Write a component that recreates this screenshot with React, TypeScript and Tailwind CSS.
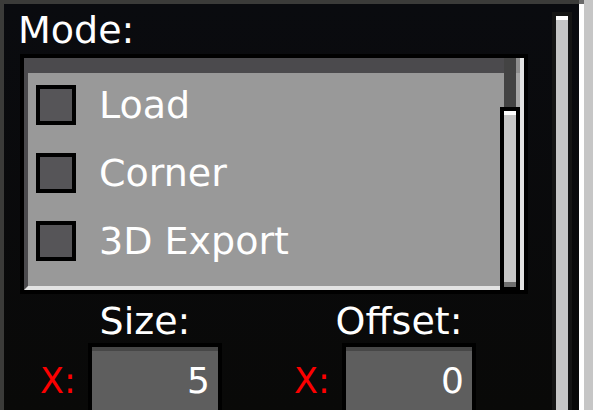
const font = "font-['DejaVu_Sans',sans-serif]";

const modes = ["Load", "Corner", "3D Export"];

function Checkbox() {
  return <div className="h-10 w-10 shrink-0 border-4 border-black bg-[#565558]" />;
}

function NumberField({ label, value }: { label: string; value: string }) {
  return (
    <div className="flex flex-col pl-9">
      <div className="ml-7 w-[154px] text-center text-[38px] leading-[38px] text-white">{label}</div>
      <div className="mt-[3px] flex items-baseline">
        <span className="w-12 text-[35px] leading-[35px] text-[#fc0000]">X:</span>
        <div className="h-[80px] w-[134px] border-4 border-black">
          <div className="h-full border-t-4 border-[#474747] bg-[#5e5e5e] pt-3 pr-2 text-right text-[36px] leading-[36px] text-white">
            {value}
          </div>
        </div>
      </div>
    </div>
  );
}

export default function App() {
  return (
    <div className={`flex h-[410px] w-[593px] overflow-hidden ${font}`}>
      <div className="flex flex-1 border-l-4 border-t-4 border-[#3b3b39] bg-gradient-to-b from-[#0a0b0f] to-[#090908]">
        <div className="flex w-[548px] shrink-0 flex-col">
          <div className="mt-[7px] shrink-0 pl-[14px] text-[38px] leading-[38px] text-white">Mode:</div>

          <div className="ml-4 mt-[5px] flex h-[240px] w-[508px] shrink-0 border-4 border-black">
            <div className="w-[476px] overflow-hidden border-b-4 border-l-4 border-t-[15px] border-[#4b4a4d] border-b-[#e3e3e3] bg-[#999999]">
              <div className="flex flex-col gap-[28px] pl-2 pt-3">
                {modes.map((m) => (
                  <div key={m} className="flex h-10 items-center gap-[23px]">
                    <Checkbox />
                    <span className="text-[38px] leading-[38px] text-white">{m}</span>
                  </div>
                ))}
              </div>
            </div>

            <div className="flex w-5 flex-col">
              <div className="flex h-[49px] shrink-0">
                <div className="w-1 border-t-[15px] border-[#4b4a4d] bg-[#999999]" />
                <div className="w-3 bg-[#434343]" />
                <div className="w-1 border-t-[15px] border-[#8f8f8f] bg-[#a6a6a6]" />
              </div>
              <div className="flex flex-1 flex-col border-4 border-b-[3px] border-black">
                <div className="h-1 bg-white" />
                <div className="flex-1 bg-[#c6c6c6]" />
                <div className="h-[5px] bg-[#6f6f6f]" />
              </div>
            </div>

            <div className="w-1 bg-[#e3e3e3]" />
          </div>

          <div className="mt-2 grid shrink-0 grid-cols-[254px_254px]">
            <NumberField label="Size:" value="5" />
            <NumberField label="Offset:" value="0" />
          </div>
        </div>

        <div className="mt-2 flex w-5 flex-col border-x-4 border-t-4 border-[#151514]">
          <div className="h-1 bg-white" />
          <div className="flex-1 bg-[#c6c6c6]" />
        </div>
      </div>

      <div className="w-[14px] bg-[#c6c6c6]">
        <div className="h-full w-[5px] border-t-4 border-[#6b6b6b] bg-white" />
      </div>
    </div>
  );
}
